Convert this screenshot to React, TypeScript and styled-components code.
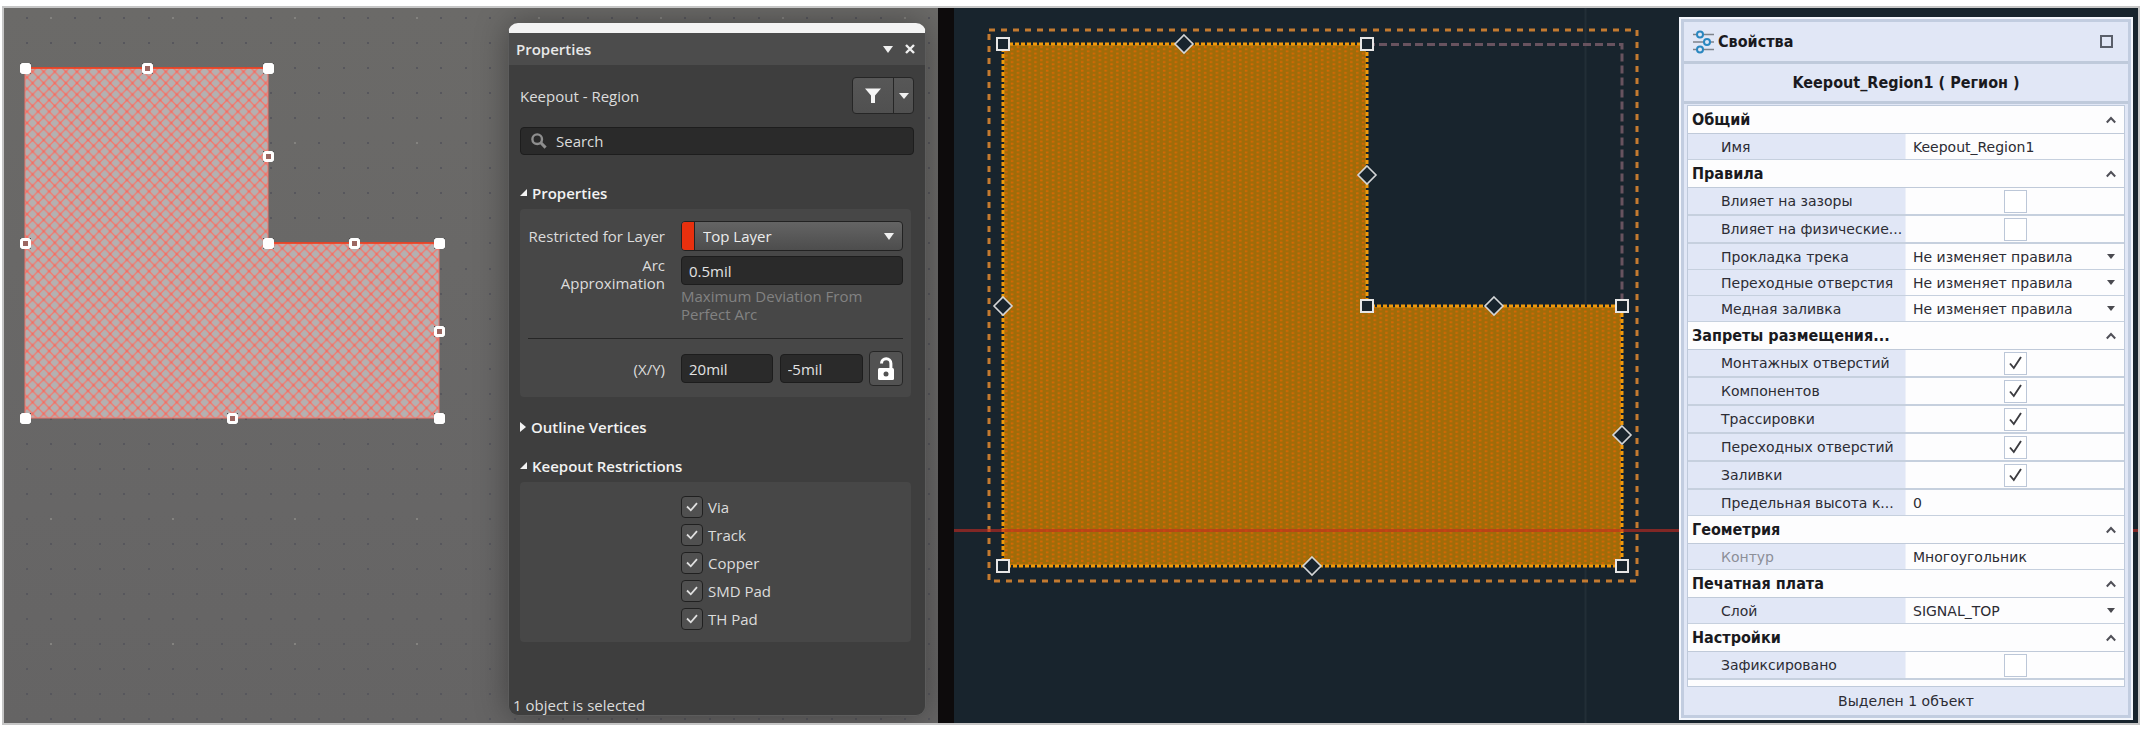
import React, { useId } from "react";
import styled, { createGlobalStyle, css } from "styled-components";

const Global = createGlobalStyle`
  *, *::before, *::after { box-sizing: border-box; }
  body { margin: 0; background: #fff; }
  button, input, select { font: inherit; color: inherit; margin: 0; padding: 0; }
`;

/* ---------- page ---------- */

const Frame = styled.main`
  display: flex;
  margin: 6px 6px 9px 2px;
  border: 2px solid #c6c6c6;
`;

const Pane = styled.section<{ $tone: "grey" | "navy"; $grow: number }>`
  position: relative;
  display: flex;
  justify-content: flex-end;
  align-items: flex-start;
  flex: ${(p) => p.$grow} 1 0;
  min-width: 0;
  overflow: hidden;
  background: ${(p) =>
    p.$tone === "grey" ? "linear-gradient(#6b6a68, #676666 70%, #656464)" : "#18242d"};
`;

const Strip = styled.div`
  flex: 0 0 16px;
  background: #0d0b0c;
`;

const Drawing = styled.svg`
  position: absolute;
  inset: 0;
  width: 100%;
  height: 100%;
`;

/* ---------- dark panel ---------- */

const DarkPanel = styled.aside`
  position: relative;
  display: flex;
  flex-direction: column;
  width: 418px;
  margin: 15px 12px 7px;
  border: 1px solid #5c5c5c;
  border-top: 10px solid #f3f3f3;
  border-radius: 10px;
  background: #3e3e3e;
  color: #dcdcdc;
  font: 15px/18px "Open Sans", "Noto Sans", sans-serif;
  box-shadow: 0 0 32px rgba(0, 0, 0, 0.35);
`;

const DarkHeader = styled.header`
  display: flex;
  align-items: center;
  height: 32px;
  padding: 0 4px 0 7px;
  background: #4c4c4c;
  h2 {
    flex: 1;
    margin: 0;
    font-size: 15px;
    font-weight: 600;
    color: #e8e8e8;
  }
`;

const PlainButton = styled.button`
  display: grid;
  place-items: center;
  width: 22px;
  height: 22px;
  border: 0;
  background: none;
`;

const DarkBody = styled.div`
  display: flex;
  flex-direction: column;
  padding: 12px 11px 0;
`;

const TitleRow = styled.div`
  display: flex;
  justify-content: space-between;
  align-items: center;
  padding-bottom: 13px;
`;

const SplitButton = styled.div`
  display: flex;
  height: 37px;
  border: 1px solid #262626;
  border-radius: 4px;
  background: linear-gradient(#575757, #505050);
  button {
    display: grid;
    place-items: center;
    width: 19px;
    border: 0;
    background: none;
  }
  button:first-child {
    width: 41px;
    border-right: 1px solid #262626;
  }
`;

const field = css`
  border: 1px solid #1d1d1d;
  border-radius: 4px;
  background: #2a2a2a;
  color: #e2e2e2;
`;

const Search = styled.label`
  ${field}
  display: flex;
  align-items: center;
  gap: 9px;
  height: 28px;
  padding-left: 10px;
  margin-bottom: 24px;
  input {
    flex: 1;
    min-width: 0;
    border: 0;
    outline: 0;
    background: none;
  }
  input::placeholder {
    color: #dcdcdc;
    opacity: 1;
  }
`;

const SectionHead = styled.button<{ $open?: boolean }>`
  display: flex;
  align-items: center;
  gap: 5px;
  height: 28px;
  margin-bottom: ${(p) => (p.$open ? 2 : 11)}px;
  border: 0;
  background: none;
  color: #f2f2f2;
  font-weight: 600;
  text-align: left;
`;

const Card = styled.div<{ $list?: boolean }>`
  display: flex;
  flex-direction: column;
  margin: 0 3px 16px 0;
  padding: ${(p) => (p.$list ? "11px 8px 9px" : "12px 8px 6px")};
  border-radius: 4px;
  background: #474747;
`;

const FormRow = styled.div<{ $top?: boolean }>`
  display: grid;
  grid-template-columns: 137px 1fr;
  column-gap: 16px;
  align-items: ${(p) => (p.$top ? "start" : "center")};
  margin-bottom: 5px;
  > label {
    text-align: right;
  }
`;

const LayerSelect = styled.div`
  position: relative;
  display: flex;
  align-items: center;
  height: 30px;
  border: 1px solid #222;
  border-radius: 4px;
  overflow: hidden;
  background: linear-gradient(#646464, #4d4d4d);
  &::before {
    content: "";
    width: 13px;
    height: 100%;
    border-right: 1px solid #222;
    background: #e8300e;
  }
  select {
    flex: 1;
    appearance: none;
    height: 100%;
    padding-left: 8px;
    border: 0;
    background: none;
    color: #ececec;
  }
  svg {
    position: absolute;
    right: 8px;
    pointer-events: none;
  }
`;

const DarkInput = styled.input`
  ${field}
  width: 100%;
  min-width: 0;
  height: 29px;
  padding: 0 7px;
`;

const Hint = styled.p`
  margin: 2px 0 0;
  color: #828282;
`;

const Rule = styled.hr`
  width: 100%;
  height: 1px;
  margin: 10px 0 12px;
  border: 0;
  background: #262626;
`;

const Coordinates = styled.div`
  display: grid;
  grid-template-columns: 92px 83px 34px;
  justify-content: space-between;
  align-items: center;
`;

const LockButton = styled.button`
  display: grid;
  place-items: center;
  height: 35px;
  border: 1px solid #262626;
  border-radius: 4px;
  background: #525252;
`;

const DarkCheck = styled.label`
  position: relative;
  display: flex;
  align-items: center;
  gap: 5px;
  height: 28px;
  margin-left: 153px;
  input {
    appearance: none;
    width: 22px;
    height: 22px;
    border: 1px solid #202020;
    border-radius: 4px;
    background: #505050;
  }
  svg {
    position: absolute;
    left: 5px;
    opacity: 0;
    pointer-events: none;
  }
  input:checked + svg {
    opacity: 1;
  }
`;

const DarkStatus = styled.footer`
  padding: 38px 4px 1px;
`;

/* ---------- light panel ---------- */

const LightPanel = styled.aside`
  position: relative;
  width: 454px;
  margin: 9px 5px 3px;
  border: 2px solid #f3f6fc;
  background: #e1e7f6;
  color: #2c2c34;
  font: 14px/18px "DejaVu Sans", sans-serif;
`;

const heading = css`
  font-family: "DejaVu Sans Condensed", "DejaVu Sans", sans-serif;
  font-size: 16px;
  font-weight: 700;
  color: #1a1a1e;
`;

const LightInner = styled.div`
  border: 3px solid #c2cde0;
`;

const LightHeader = styled.header`
  display: flex;
  align-items: center;
  gap: 4px;
  height: 39px;
  padding: 0 11px 0 9px;
  h2 {
    ${heading}
    flex: 1;
    margin: 0;
  }
`;

const ObjectTitle = styled.h3`
  ${heading}
  height: 43px;
  margin: 0;
  border: solid #bfcadb;
  border-width: 3px 0;
  line-height: 38px;
  text-align: center;
`;

const PropertyGrid = styled.div`
  margin: 1px 3px 0;
  padding-bottom: 6px;
  border: 1px solid #bfcadb;
  background: #fdfdfe;
`;

const GroupHead = styled.button`
  ${heading}
  display: flex;
  justify-content: space-between;
  align-items: center;
  width: 100%;
  height: 28px;
  padding: 0 8px 0 4px;
  border: 0;
  border-bottom: 1px solid #c0cad9;
  background: none;
`;

const PropertyRow = styled.div<{ $tall?: boolean; $dim?: boolean }>`
  display: grid;
  grid-template-columns: 1fr 1fr;
  height: ${(p) => (p.$tall ? 28 : 26)}px;
  border-bottom: ${(p) => (p.$tall ? 2 : 1)}px solid #c6d0de;
  > label {
    display: flex;
    align-items: center;
    padding-left: 33px;
    border-right: 1px solid #eef1f9;
    background: #e1e7f6;
    color: ${(p) => (p.$dim ? "#8c8f98" : "inherit")};
    white-space: nowrap;
  }
`;

const TextValue = styled.input`
  width: 100%;
  min-width: 0;
  padding-left: 7px;
  border: 0;
  background: none;
`;

const SelectValue = styled.div`
  position: relative;
  display: flex;
  align-items: center;
  select {
    width: 100%;
    height: 100%;
    appearance: none;
    padding-left: 7px;
    border: 0;
    background: none;
  }
  svg {
    position: absolute;
    right: 9px;
    pointer-events: none;
  }
`;

const CheckValue = styled.div`
  position: relative;
  display: grid;
  place-items: center;
  input {
    appearance: none;
    width: 23px;
    height: 23px;
    border: 1px solid #bcc7d8;
    background: #fff;
  }
  svg {
    position: absolute;
    opacity: 0;
    pointer-events: none;
  }
  input:checked + svg {
    opacity: 1;
  }
`;

const LightStatus = styled.footer`
  height: 28px;
  line-height: 28px;
  text-align: center;
`;

/* ---------- drawings ---------- */

type Point = [number, number];

const toPoints = (pts: Point[]) => pts.map((p) => p.join(",")).join(" ");

const greyCorners: Point[] = [[21, 60], [264, 60], [264, 235], [435, 235], [435, 410], [21, 410]];
const greyMids: Point[] = [[143, 60], [264, 148], [350, 235], [435, 323], [228, 410], [21, 235]];

function GreyCanvas() {
  const dots = [];
  for (let row = 0; row < 29; row++) {
    for (let col = 0; col < 38; col++) {
      const major = row % 5 === 0 && col % 5 === 1;
      dots.push(
        <rect
          key={`${row}-${col}`}
          x={Math.round(21.5 + col * 24.4)}
          y={Math.round(9 + row * 25.05)}
          width="2"
          height="2"
          fill={major ? "#83827f" : "#57575d"}
        />
      );
    }
  }
  return (
    <Drawing aria-hidden="true">
      <defs>
        <pattern id="mesh" x="23" y="58" width="11.1" height="11.4" patternUnits="userSpaceOnUse">
          <rect width="11.1" height="11.4" fill="#b5b0b0" />
          <path d="M0 0L11.1 11.4M11.1 0L0 11.4" stroke="#f5776c" strokeWidth="1.3" />
          <path
            d="M0 0h1.2v1.2h-1.2zM9.9 0h1.2v1.2h-1.2zM0 10.2h1.2v1.2h-1.2zM9.9 10.2h1.2v1.2h-1.2zM4.4 4.5h2.3v2.3h-2.3z"
            fill="#f46d62"
          />
        </pattern>
      </defs>
      {dots}
      <polygon points={toPoints(greyCorners)} fill="url(#mesh)" stroke="#f0776c" strokeWidth="1" />
      <path d="M22 60H264M264 235H435" stroke="#ef3a17" strokeWidth="1.5" />
      {greyCorners.map(([x, y]) => (
        <g key={`c${x}-${y}`}>
          <rect x={x - 5} y={y - 5} width="11" height="11" fill="#2e2e2e" />
          <rect x={x - 5} y={y - 5} width="11" height="11" rx="2.5" fill="#fff" />
        </g>
      ))}
      {greyMids.map(([x, y]) => (
        <g key={`m${x}-${y}`}>
          <path
            d={`M${x - 5} ${y - 5}h11v11h-11zM${x - 2} ${y - 2}v5h5v-5z`}
            fill="#2e2e2e"
          />
          <rect x={x - 2} y={y - 2} width="5" height="5" fill="#9c6762" />
          <rect x={x - 3.5} y={y - 3.5} width="8" height="8" rx="1" fill="none" stroke="#fff" strokeWidth="3" />
        </g>
      ))}
    </Drawing>
  );
}

const navyCorners: Point[] = [[49, 36], [413, 36], [413, 298], [668, 298], [668, 558], [49, 558]];
const navyMids: Point[] = [[230, 36], [413, 167], [540, 298], [668, 427], [358, 558], [49, 298]];

function NavyCanvas() {
  return (
    <Drawing aria-hidden="true">
      <defs>
        <pattern id="stipple" x="50" y="38" width="11.7" height="4.3" patternUnits="userSpaceOnUse">
          <rect width="11.7" height="4.3" fill="#a06c09" />
          <rect x="1" y="0.2" width="2.5" height="1.8" fill="#d86804" />
          <rect x="6.8" y="2.3" width="2.5" height="1.8" fill="#d86804" />
        </pattern>
      </defs>
      <path d="M631.5 0V720" stroke="#222e37" strokeWidth="2" />
      <rect x="35" y="22" width="648" height="551" fill="none" stroke="#c47a30" strokeWidth="3" strokeDasharray="6 6" />
      <path d="M413 36.5H668V298" fill="none" stroke="#68535f" strokeWidth="3" strokeDasharray="8 4" />
      <polygon points={toPoints(navyCorners)} fill="url(#stipple)" />
      <polygon points={toPoints(navyCorners)} fill="none" stroke="#18242d" strokeWidth="2" />
      <polygon points={toPoints(navyCorners)} fill="none" stroke="#f09a0c" strokeWidth="3" strokeDasharray="4 2" />
      <path d="M0 522.5H1184" stroke="#c8291f" strokeOpacity="0.6" strokeWidth="3" />
      {navyCorners.map(([x, y]) => (
        <rect key={`c${x}-${y}`} x={x - 6} y={y - 6} width="12" height="12" fill="#18242d" stroke="#e6e6e6" strokeWidth="2" />
      ))}
      {navyMids.map(([x, y]) => (
        <path key={`m${x}-${y}`} d={`M${x} ${y - 9}l9 9l-9 9l-9-9z`} fill="#18242d" stroke="#d4d6d8" strokeWidth="1.6" />
      ))}
    </Drawing>
  );
}

/* ---------- icons ---------- */

const Caret = ({ w = 10, h = 7, color = "#f0f0f0" }) => (
  <svg width={w} height={h} viewBox="0 0 10 7" preserveAspectRatio="none" aria-hidden="true">
    <path d="M0 0H10L5 7z" fill={color} />
  </svg>
);

const CloseIcon = () => (
  <svg width="10" height="10" viewBox="0 0 10 10" aria-hidden="true">
    <path d="M1 1l8 8M9 1l-8 8" stroke="#f0f0f0" strokeWidth="2.4" />
  </svg>
);

const FunnelIcon = () => (
  <svg width="16" height="15" viewBox="0 0 16 15" aria-hidden="true">
    <path d="M0 0.5H16L10 7.5V15H6V7.5z" fill="#f4f4f4" />
  </svg>
);

const SearchIcon = () => (
  <svg width="16" height="16" viewBox="0 0 16 16" aria-hidden="true">
    <circle cx="6.2" cy="6.2" r="4.8" fill="none" stroke="#8e8e8e" strokeWidth="2.4" />
    <path d="M9.8 9.8L14.6 14.6" stroke="#8e8e8e" strokeWidth="3" />
  </svg>
);

const OpenMark = () => (
  <svg width="7" height="8" viewBox="0 0 7 8" aria-hidden="true">
    <path d="M7 0V7H0z" fill="#f4f4f4" />
  </svg>
);

const ClosedMark = () => (
  <svg width="6" height="10" viewBox="0 0 6 10" aria-hidden="true">
    <path d="M0 0L6 5L0 10z" fill="#f4f4f4" />
  </svg>
);

const UnlockIcon = () => (
  <svg width="18" height="24" viewBox="0 0 18 24" aria-hidden="true">
    <path d="M4.5 6.5a4.7 4.7 0 0 1 9.4 0V12" fill="none" stroke="#fff" strokeWidth="3" />
    <rect x="1" y="11" width="16" height="12" rx="1.5" fill="#fff" />
    <circle cx="9" cy="17" r="2.5" fill="#525252" />
  </svg>
);

const DarkTick = () => (
  <svg width="12" height="10" viewBox="0 0 12 10" aria-hidden="true">
    <path d="M1 4.5L4.8 8.3L11 1.2" fill="none" stroke="#e0e0e0" strokeWidth="1.8" />
  </svg>
);

const LightTick = () => (
  <svg width="13" height="14" viewBox="0 0 13 14" aria-hidden="true">
    <path d="M1 7.5L4.8 12L12 1" fill="none" stroke="#3c3c40" strokeWidth="1.9" />
  </svg>
);

const Chevron = () => (
  <svg width="10" height="8" viewBox="0 0 10 8" aria-hidden="true">
    <path d="M0.8 6.5L5 2L9.2 6.5" fill="none" stroke="#505058" strokeWidth="2" />
  </svg>
);

const SlidersIcon = () => (
  <svg width="21" height="24" viewBox="0 0 21 24" aria-hidden="true">
    <path d="M0 4.5H21M0 12H21M0 19.5H21" stroke="#7d838c" strokeWidth="1.6" />
    <g fill="#e1e7f6" stroke="#2a87c0" strokeWidth="2">
      <circle cx="7" cy="4.5" r="3" />
      <circle cx="14" cy="12" r="3" />
      <circle cx="7" cy="19.5" r="3" />
    </g>
  </svg>
);

const WindowIcon = () => (
  <svg width="13" height="13" viewBox="0 0 13 13" aria-hidden="true">
    <rect x="1" y="1" width="11" height="11" fill="none" stroke="#5a5f6a" strokeWidth="2" />
  </svg>
);

/* ---------- panels ---------- */

function DarkProperties() {
  return (
    <DarkPanel>
      <DarkHeader>
        <h2>Properties</h2>
        <PlainButton aria-label="Menu"><Caret /></PlainButton>
        <PlainButton aria-label="Close"><CloseIcon /></PlainButton>
      </DarkHeader>
      <DarkBody>
        <TitleRow>
          <span>Keepout - Region</span>
          <SplitButton>
            <button aria-label="Filter"><FunnelIcon /></button>
            <button aria-label="Filter options"><Caret h={6} /></button>
          </SplitButton>
        </TitleRow>
        <Search>
          <SearchIcon />
          <input placeholder="Search" aria-label="Search" />
        </Search>

        <SectionHead $open><OpenMark />Properties</SectionHead>
        <Card>
          <FormRow>
            <label htmlFor="layer">Restricted for Layer</label>
            <LayerSelect>
              <select id="layer"><option>Top Layer</option></select>
              <Caret />
            </LayerSelect>
          </FormRow>
          <FormRow $top>
            <label htmlFor="arc">Arc<br />Approximation</label>
            <div>
              <DarkInput id="arc" defaultValue="0.5mil" />
              <Hint>Maximum Deviation From Perfect Arc</Hint>
            </div>
          </FormRow>
          <Rule />
          <FormRow>
            <label htmlFor="pos-x">(X/Y)</label>
            <Coordinates>
              <DarkInput id="pos-x" defaultValue="20mil" />
              <DarkInput aria-label="Y" defaultValue="-5mil" />
              <LockButton aria-label="Lock"><UnlockIcon /></LockButton>
            </Coordinates>
          </FormRow>
        </Card>

        <SectionHead><ClosedMark />Outline Vertices</SectionHead>
        <SectionHead $open><OpenMark />Keepout Restrictions</SectionHead>
        <Card $list>
          {["Via", "Track", "Copper", "SMD Pad", "TH Pad"].map((name) => (
            <DarkCheck key={name}>
              <input type="checkbox" defaultChecked />
              <DarkTick />
              {name}
            </DarkCheck>
          ))}
        </Card>
      </DarkBody>
      <DarkStatus>1 object is selected</DarkStatus>
    </DarkPanel>
  );
}

type Property = {
  name: string;
  kind: "text" | "select" | "check";
  value?: string;
  checked?: boolean;
  dim?: boolean;
};

const groups: { title: string; items: Property[] }[] = [
  { title: "Общий", items: [{ name: "Имя", kind: "text", value: "Keepout_Region1" }] },
  {
    title: "Правила",
    items: [
      { name: "Влияет на зазоры", kind: "check" },
      { name: "Влияет на физические...", kind: "check" },
      { name: "Прокладка трека", kind: "select", value: "Не изменяет правила" },
      { name: "Переходные отверстия", kind: "select", value: "Не изменяет правила" },
      { name: "Медная заливка", kind: "select", value: "Не изменяет правила" },
    ],
  },
  {
    title: "Запреты размещения...",
    items: [
      { name: "Монтажных отверстий", kind: "check", checked: true },
      { name: "Компонентов", kind: "check", checked: true },
      { name: "Трассировки", kind: "check", checked: true },
      { name: "Переходных отверстий", kind: "check", checked: true },
      { name: "Заливки", kind: "check", checked: true },
      { name: "Предельная высота к...", kind: "text", value: "0" },
    ],
  },
  { title: "Геометрия", items: [{ name: "Контур", kind: "text", value: "Многоугольник", dim: true }] },
  { title: "Печатная плата", items: [{ name: "Слой", kind: "select", value: "SIGNAL_TOP" }] },
  { title: "Настройки", items: [{ name: "Зафиксировано", kind: "check" }] },
];

function PropertyLine({ item }: { item: Property }) {
  const id = useId();
  return (
    <PropertyRow $tall={item.kind === "check"} $dim={item.dim}>
      <label htmlFor={id}>{item.name}</label>
      {item.kind === "text" && <TextValue id={id} defaultValue={item.value} readOnly={item.dim} />}
      {item.kind === "select" && (
        <SelectValue>
          <select id={id}><option>{item.value}</option></select>
          <Caret w={8} h={5} color="#4a4a50" />
        </SelectValue>
      )}
      {item.kind === "check" && (
        <CheckValue>
          <input id={id} type="checkbox" defaultChecked={item.checked} />
          <LightTick />
        </CheckValue>
      )}
    </PropertyRow>
  );
}

function LightProperties() {
  return (
    <LightPanel>
      <LightInner>
        <LightHeader>
          <SlidersIcon />
          <h2>Свойства</h2>
          <PlainButton aria-label="Развернуть"><WindowIcon /></PlainButton>
        </LightHeader>
        <ObjectTitle>Keepout_Region1 ( Регион )</ObjectTitle>
        <PropertyGrid>
          {groups.map((group) => (
            <React.Fragment key={group.title}>
              <GroupHead>{group.title}<Chevron /></GroupHead>
              {group.items.map((item) => <PropertyLine key={item.name} item={item} />)}
            </React.Fragment>
          ))}
        </PropertyGrid>
        <LightStatus>Выделен 1 объект</LightStatus>
      </LightInner>
    </LightPanel>
  );
}

export default function App() {
  return (
    <>
      <Global />
      <Frame>
        <Pane $tone="grey" $grow={934}>
          <GreyCanvas />
          <DarkProperties />
        </Pane>
        <Strip />
        <Pane $tone="navy" $grow={1184}>
          <NavyCanvas />
          <LightProperties />
        </Pane>
      </Frame>
    </>
  );
}
